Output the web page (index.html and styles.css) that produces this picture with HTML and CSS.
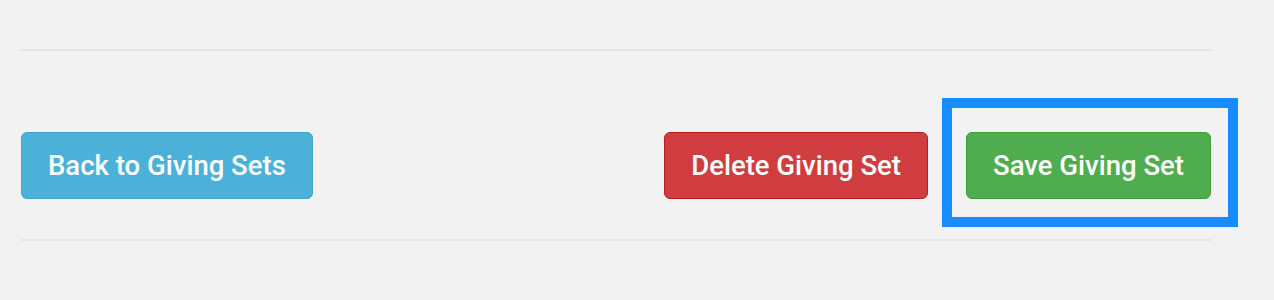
FILE: index.html
```html
<!DOCTYPE html>
<html lang="en">
<head>
    <meta charset="UTF-8">
    <title>Edit Giving Set</title>
    <link rel="stylesheet" href="styles.css">
</head>
<body>
    <div class="page">
        <hr class="divider divider-top">

        <!-- Form actions -->
        <div class="form-actions">
            <button class="btn btn-info" type="button">Back to Giving Sets</button>
            <div class="actions-right">
                <button class="btn btn-danger" type="button">Delete Giving Set</button>
                <span class="highlight">
                    <button class="btn btn-success" type="submit">Save Giving Set</button>
                </span>
            </div>
        </div>

        <hr class="divider divider-bottom">
    </div>
</body>
</html>
```

FILE: styles.css
```css
* {
    margin: 0;
    padding: 0;
    box-sizing: border-box;
}

body {
    font-family: Roboto, "Liberation Sans", Arial, sans-serif;
    background-color: #f2f2f2;
    height: 100vh;
    overflow: hidden;
}

.page {
    padding: 0 63px 0 21px;
}

.divider {
    border: 0;
    border-top: 2px solid #e6e6e6;
}

.divider-top {
    margin-top: 49px;
}

.divider-bottom {
    margin-top: 40px;
}

.form-actions {
    display: flex;
    justify-content: space-between;
    align-items: center;
    margin-top: 81px;
}

.actions-right {
    display: flex;
    align-items: center;
    gap: 38px;
}

.btn {
    font-family: inherit;
    font-size: 27.5px;
    font-weight: 500;
    color: #fff;
    height: 67px;
    padding: 0 26px;
    border: 1px solid transparent;
    border-radius: 6px;
    cursor: pointer;
}

.btn-info {
    background: #4cb1d8;
    border-color: #3fa6cf;
}

.btn-danger {
    background: #cf3d40;
    border-color: #b51c20;
}

.btn-success {
    background: #4fad4f;
    border-color: #3b9e3b;
}

.highlight {
    position: relative;
    display: flex;
}

.highlight::after {
    content: "";
    position: absolute;
    top: -34px;
    left: -24px;
    right: -27px;
    bottom: -28px;
    border: 10px solid #168cff;
    pointer-events: none;
}
```
